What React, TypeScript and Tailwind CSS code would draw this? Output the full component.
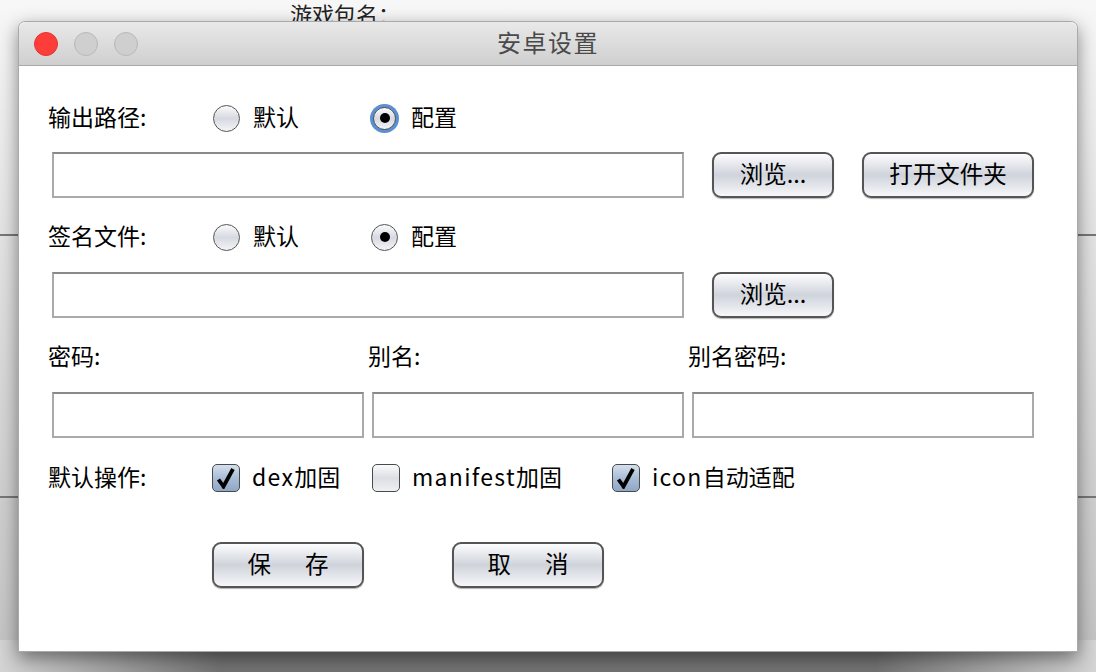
import React from 'react';

const font = { fontFamily: '"Noto Sans CJK SC", "DejaVu Sans", sans-serif' };

function Radio({ checked, label, focused }: { checked?: boolean; label: string; focused?: boolean }) {
  return (
    <div className="flex items-center w-[158px] h-full">
      <div
        className={
          'w-[29px] h-[29px] rounded-full flex items-center justify-center ' +
          (focused ? 'bg-[#5a8fd2] p-[3px]' : 'p-[1px]')
        }
      >
        <div className="w-full h-full rounded-full border-[1.5px] border-[#555] bg-gradient-to-b from-[#fbfbfc] via-[#d6d9e0] to-[#f4f5f7] flex items-center justify-center">
          {checked && <div className="w-[10px] h-[10px] rounded-full bg-black" />}
        </div>
      </div>
      <span className="ml-[12px] pb-[4px] text-[23px] text-black leading-none">{label}</span>
    </div>
  );
}

function Check({ checked, label, w }: { checked?: boolean; label: React.ReactNode; w: string }) {
  return (
    <div className={'flex items-center h-full ' + w}>
      <div
        className={
          'w-[28px] h-[28px] rounded-[5px] border-[1.5px] border-[#4a4a4a] flex items-center justify-center ' +
          (checked
            ? 'bg-gradient-to-b from-[#d5e0ee] via-[#a9bdd6] to-[#8fa8c8]'
            : 'bg-gradient-to-b from-[#fbfbfc] via-[#dcdee4] to-[#eef0f3]')
        }
      >
        {checked && (
          <svg width="20" height="22" viewBox="0 0 20 22">
            <path d="M2.5 12.5 L7.5 19.5 L17 2" fill="none" stroke="#000" strokeWidth="3.8" strokeLinejoin="miter" />
          </svg>
        )}
      </div>
      <span className="ml-[12px] pb-[4px] text-[23px] text-black leading-none">{label}</span>
    </div>
  );
}

function Btn({ children, w }: { children: React.ReactNode; w: string }) {
  return (
    <button
      className={
        'h-[46px] pb-[3px] rounded-[9px] border-2 border-[#555] bg-gradient-to-b from-[#fdfdfe] via-[#cfd3db] to-[#f6f7f9] shadow-[0_1px_1px_rgba(0,0,0,0.3)] text-[23.5px] text-black leading-none flex items-center justify-center ' +
        w
      }
    >
      {children}
    </button>
  );
}

function Field({ w }: { w: string }) {
  return <div className={'h-[46px] border-2 border-[#aaaaaa] border-t-[#8a8a8a] bg-white ' + w} />;
}

const Latin = ({ children }: { children: React.ReactNode }) => (
  <span className="tracking-[1.3px]">{children}</span>
);

export default function App() {
  return (
    <div className="w-[1096px] h-[672px] overflow-hidden bg-[#c8c8c8] flex flex-col" style={font}>
      {/* backdrop behind the dialog */}
      <div className="relative h-[640px] shrink-0 bg-gradient-to-b from-[#f7f7f7] via-[#dcdcdc] to-[#c4c4c4]">
        <div className="absolute left-[290px] top-[2px] text-[22px] text-[#222] leading-none">游戏包名：</div>
        <div className="absolute left-0 top-[234px] w-full h-[2px] bg-[#777]" />
        <div className="absolute left-0 top-[496px] w-full h-[2px] bg-[#777]" />

        {/* window */}
        <div className="absolute left-[18px] top-[21px] z-10 w-[1060px] h-[631px] bg-white rounded-t-[7px] border border-[#a9a9a9] shadow-[0_6px_18px_rgba(0,0,0,0.45)] flex flex-col">
          <div className="relative h-[44px] rounded-t-[7px] bg-gradient-to-b from-[#e9e9e9] to-[#cfcfcf] border-b border-[#a9a9a9] flex items-center">
            <div className="flex items-center gap-[16px] pl-[15px]">
              <div className="w-[24px] h-[24px] rounded-full bg-[#fc3d3a] border border-[#e23533]" />
              <div className="w-[24px] h-[24px] rounded-full bg-[#cfcfcf] border border-[#b8b8b8]" />
              <div className="w-[24px] h-[24px] rounded-full bg-[#cfcfcf] border border-[#b8b8b8]" />
            </div>
            <div className="absolute inset-0 pb-[3px] flex items-center justify-center text-[24px] text-[#4a4a4a] tracking-[1.5px] leading-none">
              安卓设置
            </div>
          </div>

          <div className="pl-[29px] flex flex-col">
            <div className="mt-[32px] h-[40px] flex items-center">
              <span className="w-[164px] pb-[4px] text-[23px] leading-none">输出路径:</span>
              <Radio label="默认" />
              <Radio label="配置" checked focused />
            </div>

            <div className="mt-[14px] flex items-center pl-[4px]">
              <Field w="w-[632px]" />
              <Btn w="ml-[28px] w-[122px]">浏览...</Btn>
              <Btn w="ml-[28px] w-[172px]">打开文件夹</Btn>
            </div>

            <div className="mt-[19px] h-[40px] flex items-center">
              <span className="w-[164px] pb-[4px] text-[23px] leading-none">签名文件:</span>
              <Radio label="默认" />
              <Radio label="配置" checked />
            </div>

            <div className="mt-[15px] flex items-center pl-[4px]">
              <Field w="w-[632px]" />
              <Btn w="ml-[28px] w-[122px]">浏览...</Btn>
            </div>

            <div className="mt-[19px] h-[40px] pb-[4px] flex items-center text-[23px] leading-none">
              <span className="w-[320px]">密码:</span>
              <span className="w-[320px]">别名:</span>
              <span>别名密码:</span>
            </div>

            <div className="mt-[15px] flex items-center pl-[4px] gap-[8px]">
              <Field w="w-[312px]" />
              <Field w="w-[312px]" />
              <Field w="w-[342px]" />
            </div>

            <div className="mt-[20px] h-[40px] flex items-center">
              <span className="w-[164px] pb-[4px] text-[23px] leading-none">默认操作:</span>
              <Check checked w="w-[160px]" label={<><Latin>dex</Latin>加固</>} />
              <Check w="w-[240px]" label={<><Latin>manifest</Latin>加固</>} />
              <Check checked w="" label={<><Latin>icon</Latin>自动适配</>} />
            </div>

            <div className="mt-[44px] flex items-center pl-[164px]">
              <Btn w="w-[152px] gap-[34px]">
                <span>保</span>
                <span>存</span>
              </Btn>
              <Btn w="ml-[88px] w-[152px] gap-[34px]">
                <span>取</span>
                <span>消</span>
              </Btn>
            </div>
          </div>
        </div>
      </div>

      {/* dark band under the dialog */}
      <div className="flex h-[32px] shrink-0">
        <div className="w-[220px] bg-gradient-to-r from-neutral-300 to-neutral-500" />
        <div className="flex-1 bg-neutral-500" />
        <div className="w-[220px] bg-gradient-to-r from-neutral-500 to-neutral-300" />
      </div>
    </div>
  );
}
